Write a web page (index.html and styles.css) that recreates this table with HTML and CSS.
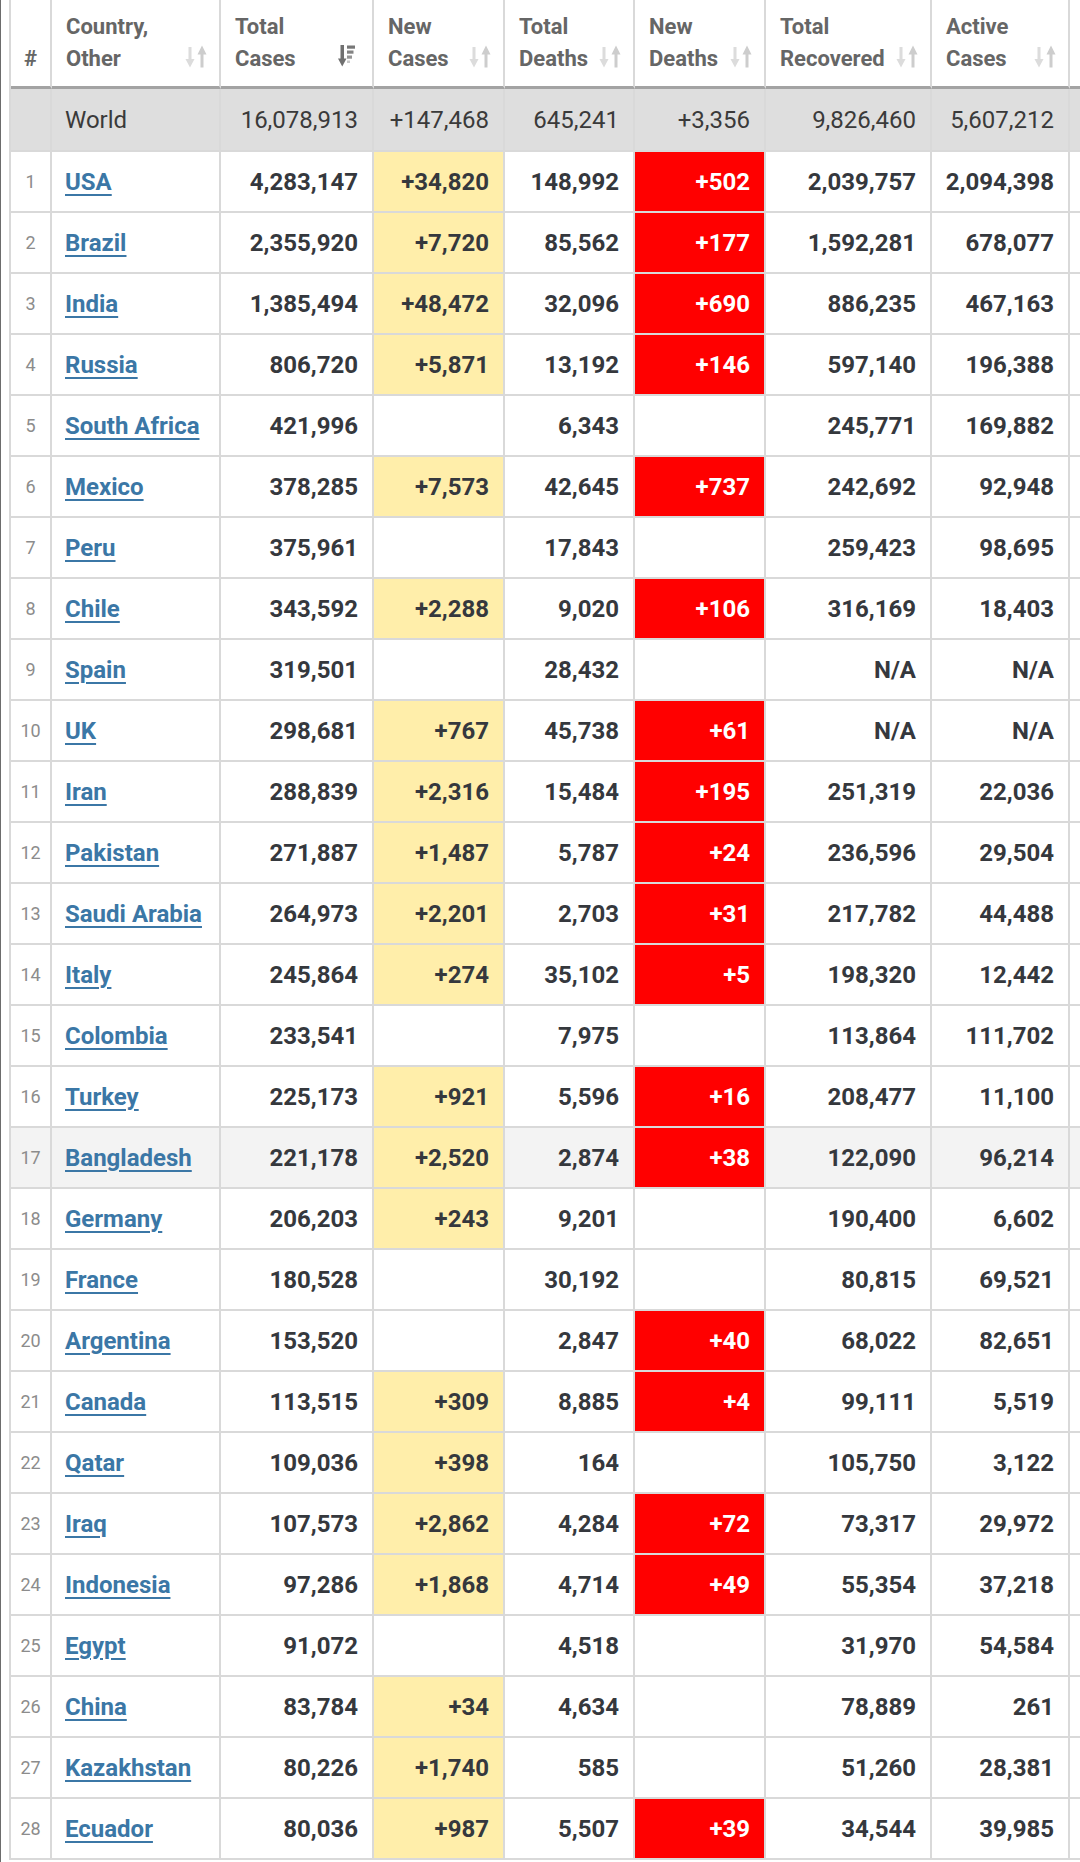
FILE: index.html
```html
<!DOCTYPE html>
<html lang="en">
<head>
<meta charset="utf-8">
<title>Coronavirus cases by country</title>
<link rel="stylesheet" href="styles.css">
</head>
<body>
<div class="page">
<table class="stats">
<colgroup>
<col class="w-rank"><col class="w-country"><col class="w-tc"><col class="w-nc"><col class="w-td"><col class="w-nd"><col class="w-tr"><col class="w-ac"><col class="w-x">
</colgroup>
<thead>
<tr>
<th class="rk-h">#</th>
<th><div class="hd"><span>Country,<br>Other</span><svg class="sort" viewBox="0 0 23 23"><rect x="3.5" y="2" width="3" height="13" fill="#dcdcdc"/><polygon points="0.5,14 9.5,14 5,22.5" fill="#dcdcdc"/><rect x="15.5" y="8" width="3" height="14.5" fill="#cdcdcd"/><polygon points="12.5,9.5 21.5,9.5 17,0.5" fill="#cdcdcd"/></svg></div></th>
<th><div class="hd"><span>Total<br>Cases</span><svg class="sort" viewBox="0 0 23 23"><rect x="2.5" y="0" width="3.5" height="14" fill="#707070"/><polygon points="0,13.5 8.5,13.5 4.25,21.5" fill="#707070"/><rect x="9" y="0.5" width="8" height="3.2" fill="#777"/><rect x="9" y="5.5" width="6.5" height="3.2" fill="#838383"/><rect x="9" y="10.5" width="5" height="3.2" fill="#959595"/><rect x="9" y="15.5" width="3" height="2.5" fill="#c8c8c8"/></svg></div></th>
<th><div class="hd"><span>New<br>Cases</span><svg class="sort" viewBox="0 0 23 23"><rect x="3.5" y="2" width="3" height="13" fill="#dcdcdc"/><polygon points="0.5,14 9.5,14 5,22.5" fill="#dcdcdc"/><rect x="15.5" y="8" width="3" height="14.5" fill="#cdcdcd"/><polygon points="12.5,9.5 21.5,9.5 17,0.5" fill="#cdcdcd"/></svg></div></th>
<th><div class="hd"><span>Total<br>Deaths</span><svg class="sort" viewBox="0 0 23 23"><rect x="3.5" y="2" width="3" height="13" fill="#dcdcdc"/><polygon points="0.5,14 9.5,14 5,22.5" fill="#dcdcdc"/><rect x="15.5" y="8" width="3" height="14.5" fill="#cdcdcd"/><polygon points="12.5,9.5 21.5,9.5 17,0.5" fill="#cdcdcd"/></svg></div></th>
<th><div class="hd"><span>New<br>Deaths</span><svg class="sort" viewBox="0 0 23 23"><rect x="3.5" y="2" width="3" height="13" fill="#dcdcdc"/><polygon points="0.5,14 9.5,14 5,22.5" fill="#dcdcdc"/><rect x="15.5" y="8" width="3" height="14.5" fill="#cdcdcd"/><polygon points="12.5,9.5 21.5,9.5 17,0.5" fill="#cdcdcd"/></svg></div></th>
<th><div class="hd"><span>Total<br>Recovered</span><svg class="sort" viewBox="0 0 23 23"><rect x="3.5" y="2" width="3" height="13" fill="#dcdcdc"/><polygon points="0.5,14 9.5,14 5,22.5" fill="#dcdcdc"/><rect x="15.5" y="8" width="3" height="14.5" fill="#cdcdcd"/><polygon points="12.5,9.5 21.5,9.5 17,0.5" fill="#cdcdcd"/></svg></div></th>
<th><div class="hd"><span>Active<br>Cases</span><svg class="sort" viewBox="0 0 23 23"><rect x="3.5" y="2" width="3" height="13" fill="#dcdcdc"/><polygon points="0.5,14 9.5,14 5,22.5" fill="#dcdcdc"/><rect x="15.5" y="8" width="3" height="14.5" fill="#cdcdcd"/><polygon points="12.5,9.5 21.5,9.5 17,0.5" fill="#cdcdcd"/></svg></div></th>
<th class="x"></th>
</tr>
</thead>
<tbody>
<tr class="world"><td></td><td class="ct">World</td><td>16,078,913</td><td>+147,468</td><td>645,241</td><td>+3,356</td><td>9,826,460</td><td>5,607,212</td><td class="x"></td></tr>
<tr><td class="rk">1</td><td class="ct"><a href="#">USA</a></td><td>4,283,147</td><td class="nc">+34,820</td><td>148,992</td><td class="nd">+502</td><td>2,039,757</td><td>2,094,398</td><td class="x"></td></tr>
<tr><td class="rk">2</td><td class="ct"><a href="#">Brazil</a></td><td>2,355,920</td><td class="nc">+7,720</td><td>85,562</td><td class="nd">+177</td><td>1,592,281</td><td>678,077</td><td class="x"></td></tr>
<tr><td class="rk">3</td><td class="ct"><a href="#">India</a></td><td>1,385,494</td><td class="nc">+48,472</td><td>32,096</td><td class="nd">+690</td><td>886,235</td><td>467,163</td><td class="x"></td></tr>
<tr><td class="rk">4</td><td class="ct"><a href="#">Russia</a></td><td>806,720</td><td class="nc">+5,871</td><td>13,192</td><td class="nd">+146</td><td>597,140</td><td>196,388</td><td class="x"></td></tr>
<tr><td class="rk">5</td><td class="ct"><a href="#">South Africa</a></td><td>421,996</td><td></td><td>6,343</td><td></td><td>245,771</td><td>169,882</td><td class="x"></td></tr>
<tr><td class="rk">6</td><td class="ct"><a href="#">Mexico</a></td><td>378,285</td><td class="nc">+7,573</td><td>42,645</td><td class="nd">+737</td><td>242,692</td><td>92,948</td><td class="x"></td></tr>
<tr><td class="rk">7</td><td class="ct"><a href="#">Peru</a></td><td>375,961</td><td></td><td>17,843</td><td></td><td>259,423</td><td>98,695</td><td class="x"></td></tr>
<tr><td class="rk">8</td><td class="ct"><a href="#">Chile</a></td><td>343,592</td><td class="nc">+2,288</td><td>9,020</td><td class="nd">+106</td><td>316,169</td><td>18,403</td><td class="x"></td></tr>
<tr><td class="rk">9</td><td class="ct"><a href="#">Spain</a></td><td>319,501</td><td></td><td>28,432</td><td></td><td>N/A</td><td>N/A</td><td class="x"></td></tr>
<tr><td class="rk">10</td><td class="ct"><a href="#">UK</a></td><td>298,681</td><td class="nc">+767</td><td>45,738</td><td class="nd">+61</td><td>N/A</td><td>N/A</td><td class="x"></td></tr>
<tr><td class="rk">11</td><td class="ct"><a href="#">Iran</a></td><td>288,839</td><td class="nc">+2,316</td><td>15,484</td><td class="nd">+195</td><td>251,319</td><td>22,036</td><td class="x"></td></tr>
<tr><td class="rk">12</td><td class="ct"><a href="#">Pakistan</a></td><td>271,887</td><td class="nc">+1,487</td><td>5,787</td><td class="nd">+24</td><td>236,596</td><td>29,504</td><td class="x"></td></tr>
<tr><td class="rk">13</td><td class="ct"><a href="#">Saudi Arabia</a></td><td>264,973</td><td class="nc">+2,201</td><td>2,703</td><td class="nd">+31</td><td>217,782</td><td>44,488</td><td class="x"></td></tr>
<tr><td class="rk">14</td><td class="ct"><a href="#">Italy</a></td><td>245,864</td><td class="nc">+274</td><td>35,102</td><td class="nd">+5</td><td>198,320</td><td>12,442</td><td class="x"></td></tr>
<tr><td class="rk">15</td><td class="ct"><a href="#">Colombia</a></td><td>233,541</td><td></td><td>7,975</td><td></td><td>113,864</td><td>111,702</td><td class="x"></td></tr>
<tr><td class="rk">16</td><td class="ct"><a href="#">Turkey</a></td><td>225,173</td><td class="nc">+921</td><td>5,596</td><td class="nd">+16</td><td>208,477</td><td>11,100</td><td class="x"></td></tr>
<tr class="hover"><td class="rk">17</td><td class="ct"><a href="#">Bangladesh</a></td><td>221,178</td><td class="nc">+2,520</td><td>2,874</td><td class="nd">+38</td><td>122,090</td><td>96,214</td><td class="x"></td></tr>
<tr><td class="rk">18</td><td class="ct"><a href="#">Germany</a></td><td>206,203</td><td class="nc">+243</td><td>9,201</td><td></td><td>190,400</td><td>6,602</td><td class="x"></td></tr>
<tr><td class="rk">19</td><td class="ct"><a href="#">France</a></td><td>180,528</td><td></td><td>30,192</td><td></td><td>80,815</td><td>69,521</td><td class="x"></td></tr>
<tr><td class="rk">20</td><td class="ct"><a href="#">Argentina</a></td><td>153,520</td><td></td><td>2,847</td><td class="nd">+40</td><td>68,022</td><td>82,651</td><td class="x"></td></tr>
<tr><td class="rk">21</td><td class="ct"><a href="#">Canada</a></td><td>113,515</td><td class="nc">+309</td><td>8,885</td><td class="nd">+4</td><td>99,111</td><td>5,519</td><td class="x"></td></tr>
<tr><td class="rk">22</td><td class="ct"><a href="#">Qatar</a></td><td>109,036</td><td class="nc">+398</td><td>164</td><td></td><td>105,750</td><td>3,122</td><td class="x"></td></tr>
<tr><td class="rk">23</td><td class="ct"><a href="#">Iraq</a></td><td>107,573</td><td class="nc">+2,862</td><td>4,284</td><td class="nd">+72</td><td>73,317</td><td>29,972</td><td class="x"></td></tr>
<tr><td class="rk">24</td><td class="ct"><a href="#">Indonesia</a></td><td>97,286</td><td class="nc">+1,868</td><td>4,714</td><td class="nd">+49</td><td>55,354</td><td>37,218</td><td class="x"></td></tr>
<tr><td class="rk">25</td><td class="ct"><a href="#">Egypt</a></td><td>91,072</td><td></td><td>4,518</td><td></td><td>31,970</td><td>54,584</td><td class="x"></td></tr>
<tr><td class="rk">26</td><td class="ct"><a href="#">China</a></td><td>83,784</td><td class="nc">+34</td><td>4,634</td><td></td><td>78,889</td><td>261</td><td class="x"></td></tr>
<tr><td class="rk">27</td><td class="ct"><a href="#">Kazakhstan</a></td><td>80,226</td><td class="nc">+1,740</td><td>585</td><td></td><td>51,260</td><td>28,381</td><td class="x"></td></tr>
<tr><td class="rk">28</td><td class="ct"><a href="#">Ecuador</a></td><td>80,036</td><td class="nc">+987</td><td>5,507</td><td class="nd">+39</td><td>34,544</td><td>39,985</td><td class="x"></td></tr>
</tbody>
</table>
</div>
</body>
</html>
```
FILE: styles.css
```css
html, body {
  margin: 0;
  padding: 0;
  background: #ffffff;
  width: 1080px;
  height: 1862px;
  overflow: hidden;
}

.page {
  box-sizing: border-box;
  height: 1862px;
  width: 1080px;
  overflow: hidden;
  border-left: 1px solid #6c6c6c;
  padding-left: 8px;
}

.stats {
  border-collapse: separate;
  border-spacing: 0;
  table-layout: fixed;
  width: 1201px;
  border-left: 2px solid #d9d9d9;
  font-family: Roboto, "Liberation Sans", Arial, sans-serif;
}

.w-rank { width: 41px; }
.w-country { width: 169px; }
.w-tc { width: 153px; }
.w-nc { width: 131px; }
.w-td { width: 130px; }
.w-nd { width: 131px; }
.w-tr { width: 166px; }
.w-ac { width: 138px; }
.w-x { width: 140px; }

.stats th,
.stats td {
  box-sizing: border-box;
  border-right: 2px solid #d9d9d9;
  border-bottom: 2px solid #d9d9d9;
  white-space: nowrap;
  overflow: hidden;
}

/* header */
.stats thead th {
  height: 89px;
  border-bottom: 3px solid #a3a3a3;
  vertical-align: bottom;
  text-align: left;
  padding: 0 11px 12px 14px;
  font-size: 22px;
  line-height: 31.5px;
  font-weight: 700;
  color: #666666;
}

.stats thead th.rk-h {
  text-align: center;
  padding: 0 0 12px 0;
}

.hd {
  display: flex;
  justify-content: space-between;
  align-items: flex-end;
}

.sort {
  width: 23px;
  height: 23px;
  flex: none;
  margin-bottom: 6px;
}

/* body rows */
.stats tbody td {
  height: 61px;
  vertical-align: middle;
  text-align: right;
  padding: 0 14px 0 13px;
  font-size: 24px;
  font-weight: 700;
  color: #35383d;
}

.stats tbody td.ct {
  text-align: left;
}

.stats tbody td.rk {
  text-align: center;
  padding: 0;
  font-size: 18px;
  font-weight: 400;
  color: #8c8c8c;
}

.stats a {
  color: #3b77a6;
  text-decoration: underline;
  text-decoration-thickness: 2px;
  text-underline-offset: 4px;
}

.stats tbody tr.world td {
  height: 63px;
  background: #dedede;
  font-weight: 400;
  color: #3a3a3a;
}

.stats tbody tr.hover td {
  background: #f3f3f3;
}

.stats tbody td.nc,
.stats tbody tr.hover td.nc {
  background: #ffeeaa;
}

.stats tbody td.nd,
.stats tbody tr.hover td.nd {
  background: #ff0000;
  color: #ffffff;
}
```
